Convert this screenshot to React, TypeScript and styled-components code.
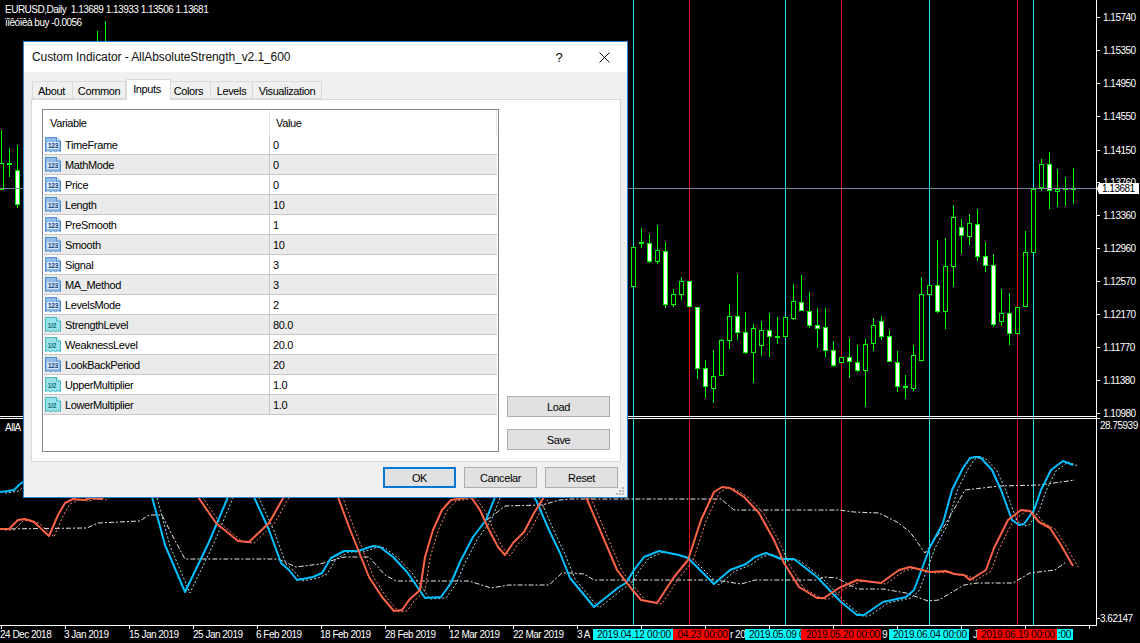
import React from "react";
import styled, { createGlobalStyle } from "styled-components";

const Global = createGlobalStyle`
  html, body { margin: 0; padding: 0; background: #000; overflow: hidden; }
  #root { width: 1140px; height: 643px; }
`;

const Screen = styled.div`
  position: relative;
  width: 1140px;
  height: 643px;
  background: #000;
  display: flex;
  flex-direction: column;
  overflow: hidden;
`;
const PaneSvg = styled.svg`
  display: block;
  flex: none;
  width: 1140px;
`;
const ChartLabel = styled.text<{ $fill?: string }>`
  font-family: "Liberation Sans", Arial, sans-serif;
  font-size: 10px;
  letter-spacing: -0.5px;
  white-space: pre;
  fill: ${(p) => p.$fill || "#fff"};
`;
const TagLabel = styled(ChartLabel)`
  letter-spacing: -0.25px;
`;

const Window = styled.div`
  position: absolute;
  left: 23px;
  top: 41px;
  width: 605px;
  height: 457px;
  box-sizing: border-box;
  border: 1px solid #2d8ad2;
  display: flex;
  flex-direction: column;
  background: #f0f0f0;
  font-family: "Liberation Sans", Arial, sans-serif;
  font-size: 11px;
  letter-spacing: -0.38px;
  color: #000;
`;
const TitleBar = styled.div`
  height: 30px;
  flex: none;
  background: #fff;
  display: flex;
  align-items: center;
  padding: 0 17px 0 8px;
`;
const TitleText = styled.div`
  flex: 1;
  font-size: 12px;
  letter-spacing: -0.08px;
  color: #111;
`;
const HelpMark = styled.span`
  font-size: 13px;
  letter-spacing: 0;
  width: 12px;
  text-align: center;
  margin-right: 34px;
`;
const CloseIcon = styled.svg`
  width: 11px;
  height: 11px;
  display: block;
`;
const TabStrip = styled.div`
  display: flex;
  height: 20px;
  margin: 7px 0 0 8px;
  align-items: flex-end;
  position: relative;
  z-index: 1;
`;
const Tab = styled.div<{ $w: number; $shift: number; $active?: boolean }>`
  width: ${(p) => p.$w}px;
  height: ${(p) => (p.$active ? 21 : 18)}px;
  margin-bottom: ${(p) => (p.$active ? -1 : 0)}px;
  box-sizing: border-box;
  display: flex;
  align-items: ${(p) => (p.$active ? "flex-start" : "center")};
  justify-content: center;
  padding-top: ${(p) => (p.$active ? 3 : 1)}px;
  padding-right: ${(p) => p.$shift}px;
  background: ${(p) => (p.$active ? "#fff" : "#f0f0f0")};
  border: 1px solid #d9d9d9;
  border-bottom: ${(p) => (p.$active ? "none" : "1px solid #d9d9d9")};
  border-left: ${(p) => (p.$active ? "1px solid #d9d9d9" : "none")};
  &:first-child { border-left: 1px solid #d9d9d9; }
`;
const Page = styled.div`
  margin: 0 0 0 7px;
  width: 590px;
  height: 363px;
  flex: none;
  box-sizing: border-box;
  background: #fff;
  border: 1px solid #d9d9d9;
  padding: 9px 0 0 10px;
  display: flex;
  gap: 8px;
`;
const List = styled.div`
  width: 457px;
  height: 343px;
  flex: none;
  box-sizing: border-box;
  border: 1px solid #82878f;
  padding: 0 1px;
`;
const HeaderRow = styled.div`
  height: 25px;
  display: flex;
  align-items: center;
  border-right: 1px solid #e5e5e5;
  box-sizing: border-box;
`;
const HeaderCell = styled.div<{ $w?: number }>`
  width: ${(p) => (p.$w ? p.$w + "px" : "auto")};
  height: 100%;
  display: flex;
  align-items: center;
  box-sizing: border-box;
  padding-left: 6px;
  border-right: ${(p) => (p.$w ? "1px solid #e5e5e5" : "none")};
`;
const Row = styled.div<{ $alt: boolean }>`
  height: 20px;
  box-sizing: border-box;
  display: flex;
  align-items: center;
  background: ${(p) => (p.$alt ? "#ebebeb" : "#fff")};
  border-bottom: 1px solid #c8c8c8;
`;
const NameCell = styled.div`
  width: 226px;
  height: 100%;
  box-sizing: border-box;
  border-right: 1px solid #c8c8c8;
  display: flex;
  align-items: center;
  gap: 4px;
  padding-left: 1px;
`;
const ValueCell = styled.div`
  padding-left: 3px;
`;
const RowIcon = styled.svg`
  width: 16px;
  height: 17px;
  flex: none;
  display: block;
`;
const IconLabel = styled.text<{ $fill: string }>`
  font-family: "Liberation Sans", Arial, sans-serif;
  font-size: 6.5px;
  font-weight: 700;
  letter-spacing: -0.2px;
  fill: ${(p) => p.$fill};
`;
const SideColumn = styled.div`
  width: 103px;
  height: 343px;
  display: flex;
  flex-direction: column;
  justify-content: flex-end;
  gap: 12px;
  padding-bottom: 2px;
  box-sizing: border-box;
`;
const DialogButton = styled.div<{ $w: number; $default?: boolean }>`
  width: ${(p) => p.$w}px;
  height: 21px;
  box-sizing: border-box;
  display: flex;
  align-items: center;
  justify-content: center;
  background: #e1e1e1;
  border: ${(p) => (p.$default ? "2px solid #0078d7" : "1px solid #adadad")};
`;
const Footer = styled.div`
  display: flex;
  justify-content: flex-end;
  gap: 8px;
  margin-top: 5px;
  padding-right: 9px;
`;
const Grip = styled.svg`
  position: absolute;
  right: 2px;
  bottom: 1px;
  width: 9px;
  height: 9px;
`;

type C = [number, number, number, number, number, string];
const z5 = (zx: number) => 620 + Math.round(zx / 3);
const zy5 = (z: number) => 130 + Math.round(z / 3);
const raw5: C[] = [
  [40,352,352,470,470,"h"],[64,294,337,341,354,"d"],[88,312,340,395,398,"w"],[112,285,361,395,401,"h"],
  [136,336,364,526,533,"w"],[160,477,493,524,530,"h"],[184,441,454,494,510,"h"],[208,454,454,530,530,"w"],
  [232,530,530,716,746,"w"],[256,690,715,770,803,"w"],[280,660,739,776,818,"h"],[304,628,631,737,737,"h"],
  [328,522,559,632,656,"h"],[352,432,559,608,629,"w"],[376,546,607,668,671,"w"],[400,583,595,668,758,"h"],
  [424,573,601,647,677,"h"],[448,549,601,620,680,"w"],[472,561,618,623,641,"d"],[496,562,562,620,620,"h"],
  [520,462,514,566,569,"h"],[544,435,517,542,542,"w"],[568,487,544,587,593,"w"],[592,534,586,596,653,"w"],
  [616,534,592,662,680,"w"],[640,633,661,707,710,"w"],[664,682,682,698,698,"h"],[688,624,682,695,743,"w"],
  [712,645,697,722,725,"w"],[736,628,643,722,830,"h"],[760,564,586,641,662,"h"],
];
const raw6: C[] = [
  [4,558,574,620,629,"w"],[28,600,619,697,697,"w"],[52,663,697,770,785,"w"],[76,735,768,773,806,"d"],
  [100,645,676,776,782,"h"],[124,441,493,694,694,"h"],[148,466,466,494,494,"h"],[172,330,466,545,548,"w"],
  [196,324,409,545,596,"h"],[220,225,262,410,470,"h"],[244,267,292,319,371,"w"],[268,252,280,320,344,"h"],
  [292,237,283,380,392,"w"],[316,336,379,407,425,"w"],[340,372,406,584,590,"w"],[364,477,550,575,587,"h"],
  [388,489,550,613,644,"w"],[412,532,532,613,613,"h"],[436,303,367,532,532,"h"],[460,178,178,368,368,"h"],
  [484,87,103,173,182,"h"],[508,66,103,184,236,"w"],[532,117,178,185,230,"h"],[556,141,175,178,227,"d"],
  [580,114,175,177,221,"d"],
];
const candles: C[] = [
  [1,130,163,190,190,"h"],[9,148,163,165,177,"d"],[17,145,170,205,208,"w"],
  [97,31,60,90,100,"h"],[105,21,60,90,100,"h"],
  ...raw5.map((r): C => [z5(r[0]), zy5(r[1]), zy5(r[2]), zy5(r[3]), zy5(r[4]), r[5]]),
  ...raw6.map((r): C => [880 + Math.round(r[0] / 3), zy5(r[1]), zy5(r[2]), zy5(r[3]), zy5(r[4]), r[5]]),
];

const vlines: [number, string][] = [
  [633, "#22e0e6"], [689, "#e01010"], [785, "#22e0e6"], [841, "#e01010"],
  [929, "#22e0e6"], [1017, "#e01010"], [1033, "#22e0e6"],
];

const VLines = ({ h }: { h: number }) => (
  <>
    {vlines.map(([x, c]) => (
      <rect key={x} x={x} y={0} width={1} height={h} fill={c} />
    ))}
  </>
);

const priceLabels: [string, number][] = [
  ["1.15740", 17],["1.15350", 50],["1.14950", 83],["1.14550", 116],["1.14150", 150],["1.13760", 182],
  ["1.13360", 215],["1.12960", 248],["1.12570", 281],["1.12170", 314],["1.11770", 347],["1.11380", 380],["1.10980", 413],
];

const blue: [number, number][] = [
  [0,492],[8,491],[14,490],[20,484],[30,478],[100,450],[140,470],[152,497],[165,545],[185,592],[209,542],[228,497],[240,470],[254,497],[269,530],[281,563],[289,570],[297,580],[313,577],[322,573],[331,558],[344,551],[358,551],[373,546],[380,547],[393,557],[407,572],[425,598],[441,597],[451,583],[460,562],[473,537],[486,520],[495,497],[515,470],[536,500],[549,530],[560,553],[570,578],
  [594,607],[619,587],[626,583],[634,570],[644,557],[659,551],[679,555],[688,558],[714,584],[730,570],[746,564],[755,557],[766,553],[781,559],[794,559],[817,577],[841,602],[857,615],[864,615],[883,602],[906,597],[914,590],[930,547],[943,523],[952,490],[963,468],[970,458],[975,457],[980,457],[992,470],[1001,490],[1012,520],[1019,525],[1024,524],[1034,510],[1041,490],[1051,470],[1063,461],[1073,465],
];
const tomato: [number, number][] = [
  [0,529],[9,529],[18,520],[25,519],[34,522],[49,536],[58,515],[65,503],[73,499],[84,500],[91,498],[100,499],[160,470],[198,497],[216,523],[227,532],[238,541],[249,542],[269,523],[282,500],[310,460],[338,497],[349,527],[369,577],[382,597],[394,611],[402,610],[409,600],[420,590],[425,557],[433,530],[442,510],[451,500],[471,497],[480,510],[489,530],[498,547],[505,555],[513,543],[524,532],[534,513],[544,497],[565,470],[586,497],
  [617,570],[630,587],[641,600],[657,603],[674,577],[688,560],[701,520],[714,492],[722,487],[730,488],[744,497],[759,513],[774,540],[784,563],[799,587],[817,598],[824,598],[839,588],[857,580],[881,583],[899,570],[910,567],[930,572],[946,571],[954,574],[964,575],[970,580],[986,570],[994,548],[1008,520],[1021,510],[1030,511],[1039,522],[1050,528],[1061,545],[1073,566],
];
const lowerBand: [number, number][] = [
  [0,529],[87,528],[98,523],[140,521],[149,515],[162,515],[171,533],[185,559],[278,559],[296,567],[320,564],[344,557],[369,557],[385,575],[396,581],[469,581],[491,588],[509,585],[549,585],[562,573],[570,573],[584,574],[594,580],[715,580],[741,584],[755,580],[817,580],[824,577],[837,578],[857,589],[883,589],[906,593],[928,601],[939,600],[964,585],[977,583],[1013,583],[1030,573],[1055,570],[1066,562],
];
const upperBand: [number, number][] = [
  [487,520],[505,506],[542,505],[560,500],[570,499],[721,499],[734,510],[839,510],[854,512],[879,513],[897,522],[910,532],[925,553],[945,525],[965,490],[1000,486],[1040,485],[1075,480],
];
const pts = (a: [number, number][]) => a.map(([x, y]) => `${x},${y - 418}`).join(" ");

const indicatorCurve = (a: [number, number][], c: string, w: number, dash?: string, shift = 0) => (
  <polyline
    points={pts(a)}
    fill="none"
    stroke={c}
    strokeWidth={w}
    strokeDasharray={dash}
    strokeLinejoin="round"
    transform={shift ? `translate(${shift},1)` : undefined}
  />
);

const ticks = [1, 65, 129, 193, 257, 321, 385, 449, 513, 577, 641, 705, 769, 833, 897, 961, 1025, 1089];
/* only the parts of the date row that the time tags leave visible */
const dateLabels: [number, string][] = [
  [0, "24 Dec 2018"],[64, "3 Jan 2019"],[129, "15 Jan 2019"],[193, "25 Jan 2019"],[256, "6 Feb 2019"],
  [320, "18 Feb 2019"],[385, "28 Feb 2019"],[449, "12 Mar 2019"],[513, "22 Mar 2019"],
  [577, "3 A"],[730, "r 20"],[882, "9"],[973, "J"],
];
const tags: [number, string, number, string][] = [
  [649, "#ff0000", 675, ".04.23 00:00"],
  [593, "#00ffff", 597, "2019.04.12 00:00"],
  [745, "#00ffff", 749, "2019.05.09 0"],
  [801, "#ff0000", 806, "2019.05.20 00:00"],
  [889, "#00ffff", 893, "2019.06.04 00:00"],
  [993, "#00ffff", 1058, ":00"],
  [977, "#ff0000", 981, "2019.06.19 00:00"],
];

const IntIcon = () => (
  <RowIcon viewBox="0 0 16 17">
    <path d="M.5 1.5H11.5L15.5 5V15.5L13 14.5L10.5 15.8L8 14.5L5.5 15.8L3 14.5L.5 15.5Z" fill="#8fbce8" stroke="#4f8ccf" />
    <path d="M11.5 1.5V5H15.5" fill="#dcecfb" stroke="#4f8ccf" />
    <rect x="2" y="6" width="12" height="7" fill="#d5e6f8" />
    <IconLabel x="8" y="12" textAnchor="middle" $fill="#143f80">123</IconLabel>
  </RowIcon>
);
const RealIcon = () => (
  <RowIcon viewBox="0 0 16 17">
    <path d="M.5 1.5H11.5L15.5 5V15.5L13 14.5L10.5 15.8L8 14.5L5.5 15.8L3 14.5L.5 15.5Z" fill="#97e2e8" stroke="#45b3c2" />
    <path d="M11.5 1.5V5H15.5" fill="#dff6f7" stroke="#45b3c2" />
    <IconLabel x="7" y="12" textAnchor="middle" $fill="#0d6c7c">1/2</IconLabel>
  </RowIcon>
);

const rows: [string, string, boolean][] = [
  ["TimeFrame", "0", false],["MathMode", "0", false],["Price", "0", false],["Length", "10", false],
  ["PreSmooth", "1", false],["Smooth", "10", false],["Signal", "3", false],["MA_Method", "3", false],
  ["LevelsMode", "2", false],["StrengthLevel", "80.0", true],["WeaknessLevel", "20.0", true],
  ["LookBackPeriod", "20", false],["UpperMultiplier", "1.0", true],["LowerMultiplier", "1.0", true],
];
const tabs: [string, number, number][] = [
  ["About", 41, 2],["Common", 53, 0],["Inputs", 45, 3],["Colors", 40, 4],["Levels", 42, 0],["Visualization", 69, 0],
];

export default function App() {
  return (
    <Screen>
      <Global />
      <PaneSvg height={418} viewBox="0 0 1140 418">
        <VLines h={418} />
        <g shapeRendering="crispEdges">
          {candles.map(([x, hi, t, b, lo, k]) => (
            <g key={x}>
              <rect x={x} y={hi} width={1} height={lo - hi} fill="#00ff00" />
              <rect
                x={x - 1.5}
                y={t + 0.5}
                width={4}
                height={Math.max(b - t - 1, 1)}
                fill={k === "w" ? "#fff" : k === "d" ? "#00ff00" : "#000"}
                stroke="#00ff00"
              />
            </g>
          ))}
          <rect x={0} y={188} width={1096} height={1} fill="#778899" />
          <rect x={1096} y={0} width={1} height={418} fill="#fff" />
          <rect x={0} y={416} width={1097} height={1} fill="#fff" />
          {priceLabels.map(([, y]) => (
            <rect key={y} x={1097} y={y} width={3} height={1} fill="#fff" />
          ))}
        </g>
        {priceLabels.map(([l, y]) => (
          <ChartLabel key={l} x={1103} y={y + 4}>{l}</ChartLabel>
        ))}
        <path d="M1097 188.5L1099 183H1139V194H1099Z" fill="#fff" />
        <ChartLabel x={1102} y={192} $fill="#000">1.13681</ChartLabel>
        <ChartLabel x={5} y={13}>EURUSD,Daily  1.13689 1.13933 1.13506 1.13681</ChartLabel>
        <ChartLabel x={5} y={26}>ïîêóïêà buy -0.0056</ChartLabel>
      </PaneSvg>
      <PaneSvg height={207} viewBox="0 0 1140 207">
        <VLines h={207} />
        {indicatorCurve(lowerBand, "#e8e8e8", 1, "5 2 2 2")}
        {indicatorCurve(upperBand, "#e8e8e8", 1, "5 2 2 2")}
        {indicatorCurve(blue, "#a7dcf2", 1, "2 2", 5)}
        {indicatorCurve(tomato, "#ff8a70", 1, "2 2", 5)}
        {indicatorCurve(blue, "#00bfff", 2)}
        {indicatorCurve(tomato, "#ff6347", 2)}
        <g shapeRendering="crispEdges">
          <rect x={0} y={0} width={1097} height={1} fill="#fff" />
          <rect x={1096} y={0} width={1} height={207} fill="#fff" />
          <rect x={1097} y={0} width={3} height={1} fill="#fff" />
          <rect x={1097} y={200} width={3} height={1} fill="#fff" />
        </g>
        <ChartLabel x={5} y={13}>AllA</ChartLabel>
        <ChartLabel x={1100} y={11}>28.75939</ChartLabel>
        <ChartLabel x={1100} y={204}>3.62147</ChartLabel>
      </PaneSvg>
      <PaneSvg height={18} viewBox="0 0 1140 18">
        <g shapeRendering="crispEdges">
          <rect x={0} y={0} width={1097} height={1} fill="#fff" />
          {ticks.map((x) => (
            <rect key={x} x={x} y={1} width={1} height={3} fill="#fff" />
          ))}
        </g>
        {dateLabels.map(([x, d]) => (
          <ChartLabel key={d} x={x} y={13}>{d}</ChartLabel>
        ))}
        {tags.map(([x, c, tx, t]) => (
          <g key={t}>
            <rect x={x} y={4} width={80} height={11} fill={c} shapeRendering="crispEdges" />
            <TagLabel x={tx} y={13} $fill="#000">{t}</TagLabel>
          </g>
        ))}
      </PaneSvg>

      <Window>
        <TitleBar>
          <TitleText>Custom Indicator - AllAbsoluteStrength_v2.1_600</TitleText>
          <HelpMark>?</HelpMark>
          <CloseIcon viewBox="0 0 11 11">
            <path d="M.5.5L10.5 10.5M10.5.5L.5 10.5" stroke="#111" strokeWidth="1" fill="none" />
          </CloseIcon>
        </TitleBar>
        <TabStrip>
          {tabs.map(([t, w, s]) => (
            <Tab key={t} $w={w} $shift={s} $active={t === "Inputs"}>{t}</Tab>
          ))}
        </TabStrip>
        <Page>
          <List>
            <HeaderRow>
              <HeaderCell $w={226}>Variable</HeaderCell>
              <HeaderCell>Value</HeaderCell>
            </HeaderRow>
            {rows.map(([n, v, real], i) => (
              <Row key={n} $alt={i % 2 === 1}>
                <NameCell>
                  {real ? <RealIcon /> : <IntIcon />}
                  {n}
                </NameCell>
                <ValueCell>{v}</ValueCell>
              </Row>
            ))}
          </List>
          <SideColumn>
            <DialogButton $w={103}>Load</DialogButton>
            <DialogButton $w={103}>Save</DialogButton>
          </SideColumn>
        </Page>
        <Footer>
          <DialogButton $w={73} $default>OK</DialogButton>
          <DialogButton $w={73}>Cancelar</DialogButton>
          <DialogButton $w={73}>Reset</DialogButton>
        </Footer>
        <Grip viewBox="0 0 9 9" shapeRendering="crispEdges">
          {[[6, 0], [3, 3], [6, 3], [0, 6], [3, 6], [6, 6]].map(([x, y]) => (
            <rect key={`${x}-${y}`} x={x} y={y} width={2} height={2} fill="#b8b8b8" />
          ))}
        </Grip>
      </Window>
    </Screen>
  );
}
